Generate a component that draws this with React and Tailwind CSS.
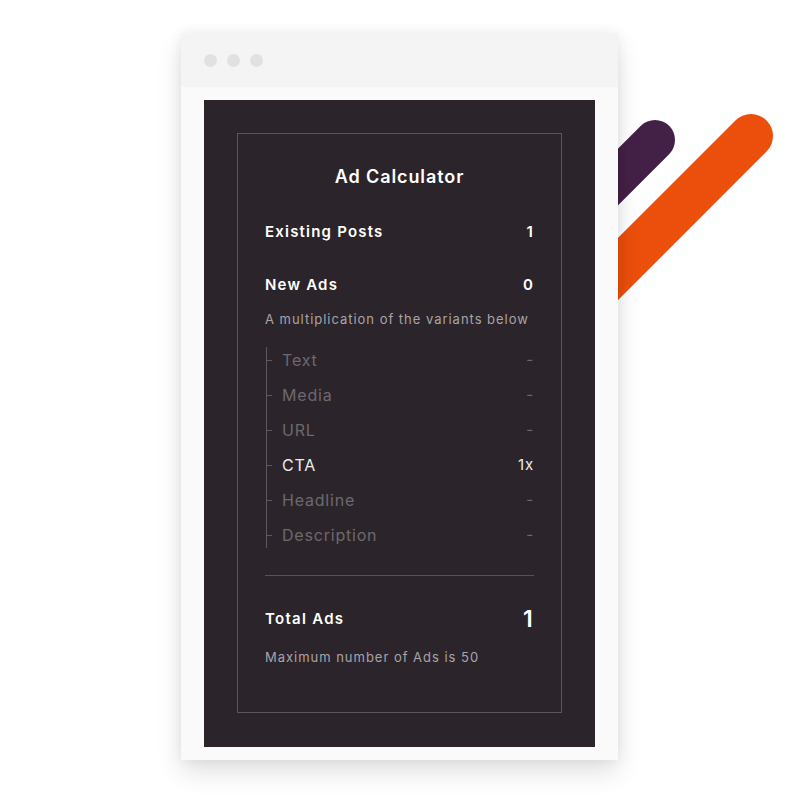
import React from 'react';

const variants = [
    { name: 'Text', value: '-' },
    { name: 'Media', value: '-' },
    { name: 'URL', value: '-' },
    { name: 'CTA', value: '1x', active: true },
    { name: 'Headline', value: '-' },
    { name: 'Description', value: '-' },
];

const Stripes = () => (
    <svg className="absolute left-0 top-0" width="800" height="800" viewBox="0 0 800 800">
        <line x1="655" y1="140" x2="455" y2="340" stroke="#432146" strokeWidth="40" strokeLinecap="round" />
        <line x1="751" y1="136" x2="451" y2="436" stroke="#ec4e0b" strokeWidth="44" strokeLinecap="round" />
    </svg>
);

const App = () => {
    return (
        <div className="relative w-[800px] h-[800px] bg-white overflow-hidden font-['Inter',sans-serif]">
            <Stripes />

            <div className="relative ml-[181px] mt-[33px] w-[437px] bg-[#fafafa] shadow-[0_12px_24px_rgba(0,0,0,0.12),0_0_12px_rgba(0,0,0,0.06)]">
                {/* title bar */}
                <div className="h-[54px] bg-[#f4f4f4] flex items-center gap-[10px] pl-[23px]">
                    <span className="w-[13px] h-[13px] rounded-full bg-[#e1e1e1]"></span>
                    <span className="w-[13px] h-[13px] rounded-full bg-[#e1e1e1]"></span>
                    <span className="w-[13px] h-[13px] rounded-full bg-[#e1e1e1]"></span>
                </div>

                <div className="px-[23px] pt-[13px] pb-[13px]">
                    <div className="bg-[#2b252b] p-[33px] pb-[34px]">
                        <div className="border border-[#5b565a] h-[580px] px-[27px] pt-[30px]">
                            <h2 className="text-center text-white text-[18px] font-semibold leading-[26px] tracking-[0.05em]">Ad Calculator</h2>

                            <div className="mt-[31px] flex justify-between text-white text-[15px] font-semibold leading-[22px] tracking-[0.08em]">
                                <span>Existing Posts</span>
                                <span>1</span>
                            </div>

                            <div className="mt-[31px] flex justify-between text-white text-[15px] font-semibold leading-[22px] tracking-[0.08em]">
                                <span>New Ads</span>
                                <span>0</span>
                            </div>
                            <p className="mt-[14px] text-[13px] text-[#a9a4a8] leading-[18px] tracking-[0.075em]">A multiplication of the variants below</p>

                            <div className="mt-[19px] ml-px border-l border-[#5e595d] flex flex-col gap-[9px]">
                                {variants.map((v) => (
                                    <div key={v.name} className="flex items-center h-[26px] tracking-[0.05em]">
                                        <span className="w-[5px] h-px bg-[#5e595d]"></span>
                                        <span className={`ml-[10px] text-[16px] ${v.active ? 'text-[#ececec]' : 'text-[#6e686d]'}`}>{v.name}</span>
                                        <span className={`ml-auto text-[15px] ${v.active ? 'text-[#ececec]' : 'text-[#6e686d]'}`}>{v.value}</span>
                                    </div>
                                ))}
                            </div>

                            <div className="mt-[27px] h-px bg-[#57525a]"></div>

                            <div className="mt-[30px] flex justify-between items-center text-white font-semibold h-[26px] tracking-[0.08em]">
                                <span className="text-[15px]">Total Ads</span>
                                <span className="text-[23px]">1</span>
                            </div>
                            <p className="mt-[16px] text-[13px] text-[#a9a4a8] leading-[18px] tracking-[0.075em]">Maximum number of Ads is 50</p>
                        </div>
                    </div>
                </div>
            </div>
        </div>
    );
};

export default App;
